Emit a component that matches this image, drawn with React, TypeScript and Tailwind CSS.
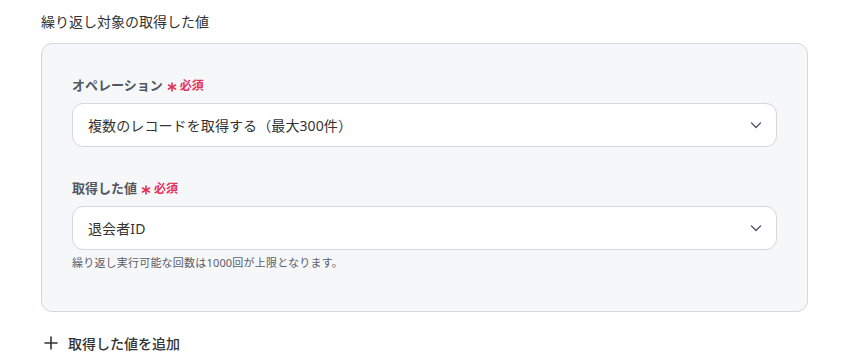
import React from "react";

const font = "font-['Noto_Sans','Noto_Sans_CJK_JP',sans-serif]";

const Chevron = () => (
  <svg width="12" height="12" viewBox="0 0 12 12" fill="none" className="shrink-0">
    <path d="M1.5 4l4.5 4.5L10.5 4" stroke="#555c66" strokeWidth="1.4" strokeLinecap="round" strokeLinejoin="round" />
  </svg>
);

const Required = () => (
  <span className="ml-[4px] flex items-center gap-[3px] text-[12px] font-bold text-[#e5325c]">
    <svg width="10" height="10" viewBox="0 0 10 10" className="mt-[2px]">
      <g stroke="#e5325c" strokeWidth="1.6" strokeLinecap="round">
        <path d="M5 1v8" />
        <path d="M1.5 3l7 4" />
        <path d="M8.5 3l-7 4" />
      </g>
    </svg>
    必須
  </span>
);

interface SelectFieldProps {
  label: string;
  value: string;
}

const SelectField: React.FC<SelectFieldProps> = ({ label, value }) => (
  <div>
    <div className="flex items-center h-[20px] mb-[7px]">
      <span className="text-[13px] font-bold text-[#505863]">{label}</span>
      <Required />
    </div>
    <div className="h-[44px] bg-white border border-[#d3d7de] rounded-[11px] flex items-center justify-between pl-[15px] pr-[14px]">
      <span className="text-[14px] text-[#333] tracking-[0.1px]">{value}</span>
      <Chevron />
    </div>
  </div>
);

export default function App() {
  return (
    <div className={`${font} w-[844px] h-[363px] bg-white overflow-hidden pl-[41px] pr-[36px]`}>
      {/* Title */}
      <div className="pt-[12px] h-[43px] text-[14px] text-[#333] leading-[20px]">
        繰り返し対象の取得した値
      </div>

      {/* Box */}
      <div className="h-[269px] bg-[#f6f7f9] border border-[#d3d7de] rounded-[11px] pt-[32px] px-[30px]">
        <SelectField label="オペレーション" value="複数のレコードを取得する（最大300件）" />
        <div className="h-[32px]" />
        <SelectField label="取得した値" value="退会者ID" />
        <p className="mt-[5px] text-[11px] leading-[16px] text-[#5a606a] tracking-[0.2px]">
          繰り返し実行可能な回数は1000回が上限となります。
        </p>
      </div>

      {/* Add */}
      <div className="mt-[21px] flex items-center h-[20px] text-[14px] font-medium text-[#333]">
        <svg width="14" height="14" viewBox="0 0 14 14" className="ml-[3px] mr-[10px]">
          <path d="M7 1v12M1 7h12" stroke="#333" strokeWidth="1.6" strokeLinecap="round" />
        </svg>
        取得した値を追加
      </div>
    </div>
  );
}
